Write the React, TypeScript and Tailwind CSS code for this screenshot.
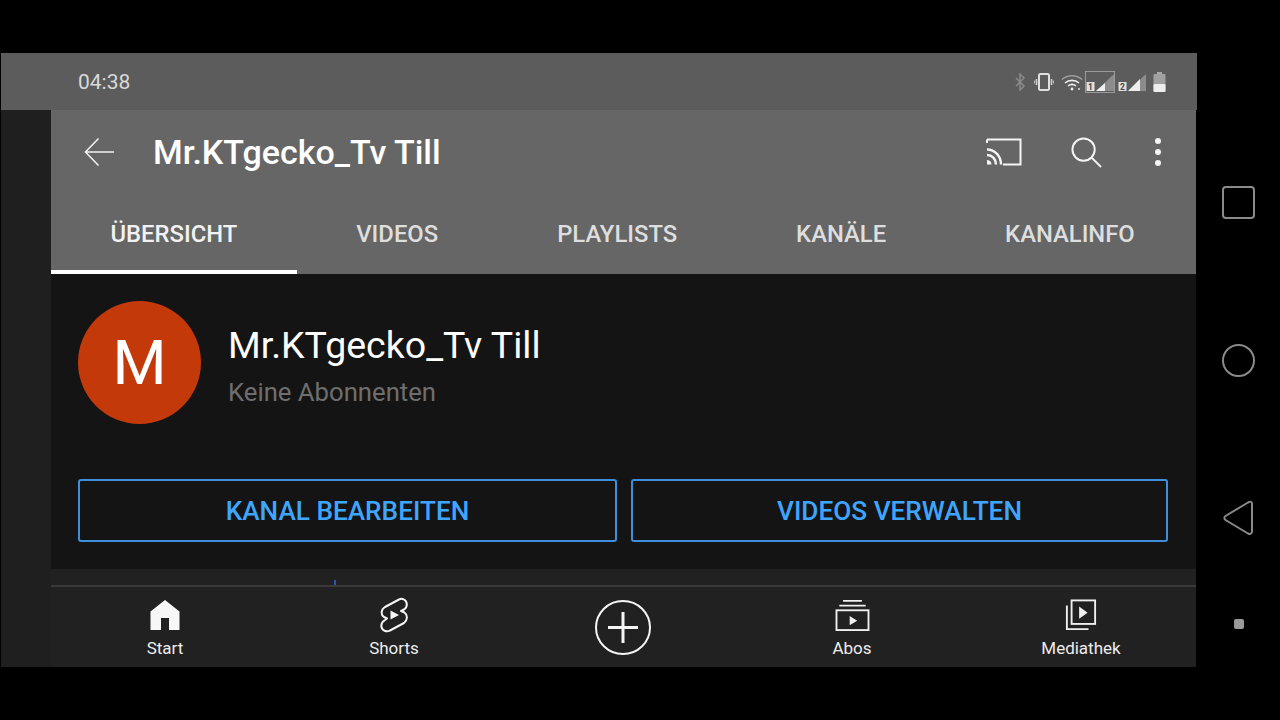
const font = { fontFamily: 'Roboto, sans-serif' }

const tabs = ['ÜBERSICHT', 'VIDEOS', 'PLAYLISTS', 'KANÄLE', 'KANALINFO']

function Sim({ n, boxed }: { n: string; boxed?: boolean }) {
  return (
    <svg width="30" height="22" viewBox="0 0 30 22" className="block">
      {boxed && <rect x="0.500" y="0.500" width="29" height="21" fill="none" stroke="#9a9a9a" />}
      <path d="M29 3V20H11Z" fill="#8c8c8c" />
      <path d={boxed ? 'M20 12V20H11Z' : 'M23 8V20H11Z'} fill="#eeeeee" />
      <rect x="1.500" y="11" width="8" height="9" fill="#e0e0e0" />
      <text x="5.500" y="19" fontSize="8.500" fontWeight="700" textAnchor="middle" fill="#444" fontFamily="Roboto">{n}</text>
    </svg>
  )
}

function StatusIcons() {
  return (
    <div className="flex items-center">
      <svg width="12" height="18" viewBox="0 0 12 18" fill="none" stroke="#8a8a8a" strokeWidth="1.500" className="mr-[8px]">
        <path d="M2 5l8 8-4 4V1l4 4-8 8" />
      </svg>
      <svg width="20" height="18" viewBox="0 0 20 18" fill="none" className="mr-[7px]">
        <rect x="5" y="1" width="10" height="16" rx="1.500" stroke="#e0e0e0" strokeWidth="2" />
        <path d="M2.500 6v6M17.500 6v6" stroke="#d0d0d0" strokeWidth="1.600" />
        <path d="M0.500 7.500v3M19.500 7.500v3" stroke="#bdbdbd" strokeWidth="1" />
      </svg>
      <svg width="22" height="18" viewBox="0 0 22 18" fill="none" strokeWidth="1.600" className="mr-[2px]">
        <path d="M1 6.500C6.500 1.500 15.500 1.500 21 6.500" stroke="#9c9c9c" />
        <path d="M4 10C8 6.500 14 6.500 18 10" stroke="#eeeeee" />
        <path d="M7 13C9.500 11 12.500 11 15 13" stroke="#eeeeee" />
        <circle cx="11" cy="16" r="1.400" fill="#eeeeee" stroke="none" />
        <circle cx="18" cy="16" r="1" fill="#dddddd" stroke="none" />
      </svg>
      <Sim n="1" boxed />
      <div className="ml-[2px]"><Sim n="2" /></div>
      <svg width="13" height="20" viewBox="0 0 13 20" className="ml-[6px]">
        <rect x="4" y="0" width="5" height="2" fill="#a8a8a8" />
        <rect x="0.500" y="2" width="12" height="18" rx="1" fill="#a0a0a0" />
        <rect x="0.500" y="12" width="12" height="8" rx="1" fill="#eeeeee" />
      </svg>
    </div>
  )
}

function NavItem({ label, children }: { label: string; children: React.ReactNode }) {
  return (
    <div className="w-[229px] h-full flex flex-col items-center pr-[1px]">
      <div className="h-[46px] mt-[5px] flex items-center justify-center">{children}</div>
      <span className="text-[17px] leading-[18px] text-[#ededed] mt-[1px]">{label}</span>
    </div>
  )
}

function Side() {
  return (
    <div className="flex-1 flex flex-col items-center pt-[133px]">
      <div className="w-[33px] h-[33px] rounded-[4px] border-[2px] border-[#8a8a8a]" />
      <div className="w-[33px] h-[33px] rounded-full border-[2px] border-[#8a8a8a] mt-[125px]" />
      <svg width="34" height="36" viewBox="0 0 34 36" fill="none" className="mt-[123px]">
        <path d="M30 3.500V31.500C30 33.500 28 34.500 26 33.500L3.500 20C2 19 2 17 3.500 16L26 2.500C28 1.500 30 1.500 30 3.500Z" stroke="#8a8a8a" strokeWidth="2" strokeLinejoin="round" />
      </svg>
      <div className="w-[10px] h-[10px] rounded-[2px] bg-[#9a9a9a] mt-[83px]" />
    </div>
  )
}

export default function App() {
  return (
    <div className="w-[1280px] h-[720px] bg-black flex pt-[53px] overflow-hidden" style={font}>
      <div className="w-[1196px] h-[614px] ml-px flex flex-col">
        <div className="h-[57px] bg-[#5c5c5c] flex items-center justify-between pl-[77px] pr-[31px]">
          <span className="text-[21px] text-[#d9d9d9] pt-[2px]">04:38</span>
          <StatusIcons />
        </div>
        <div className="flex-1 flex bg-[#1f1f1f] mr-px">
          <div className="w-[50px] shrink-0" />
          <div className="flex-1 min-w-0 flex flex-col">
            <div className="h-[164px] bg-[#666666] flex flex-col">
              <div className="h-[84px] flex items-center pl-[33px]">
                <svg width="31" height="30" viewBox="0 0 32 30" fill="none" stroke="#f2f2f2" strokeWidth="1.600">
                  <path d="M31 15H2M15 1L1.500 15L15 29" />
                </svg>
                <span className="text-[34px] font-medium text-white ml-[38px] whitespace-nowrap">Mr.KTgecko_Tv Till</span>
                <svg width="36" height="28" viewBox="0 0 36 28" fill="none" className="ml-auto">
                  <path d="M1 1.500H34.500V26.500H17" stroke="#f5f5f5" strokeWidth="2" />
                  <path d="M1 1.500V5" stroke="#f5f5f5" strokeWidth="2" />
                  <path d="M1 11.500C9 11.500 15 18 15 26.500M1 17C6 17 10 21 10 26.500" stroke="#f5f5f5" strokeWidth="2.400" />
                  <path d="M1 22a4.500 4.500 0 0 1 4.500 4.500H1Z" fill="#f5f5f5" />
                </svg>
                <svg width="31" height="31" viewBox="0 0 32 32" fill="none" stroke="#f5f5f5" strokeWidth="2" className="ml-[49px]">
                  <circle cx="13" cy="13" r="11.500" />
                  <path d="M21 21L31 31" />
                </svg>
                <div className="flex flex-col gap-[5px] ml-[53px] mr-[35px]">
                  <div className="w-[6px] h-[6px] rounded-full bg-[#f5f5f5]" />
                  <div className="w-[6px] h-[6px] rounded-full bg-[#f5f5f5]" />
                  <div className="w-[6px] h-[6px] rounded-full bg-[#f5f5f5]" />
                </div>
              </div>
              <div className="flex-1 flex">
                {tabs.map((t, i) => (
                  <div
                    key={t}
                    className={`px-[59.500px] flex items-center justify-center pt-[6px] whitespace-nowrap text-[23.800px] font-medium border-b-[4px] ${i === 0 ? 'border-white text-[#f2f2f2]' : 'border-transparent text-[#dedede]'}`}
                  >
                    {t}
                  </div>
                ))}
              </div>
            </div>
            <div className="h-[295px] bg-[#141414] pl-[27px] pr-[28px] pt-[27px]">
              <div className="flex items-center">
                <div className="w-[123px] h-[123px] rounded-full bg-[#c4390a] flex items-center justify-center text-white text-[62px]">M</div>
                <div className="ml-[27px] flex flex-col pt-[3px]">
                  <span className="text-[37.500px] leading-[44px] text-white whitespace-nowrap">Mr.KTgecko_Tv Till</span>
                  <span className="text-[25.700px] leading-[28px] text-[#6e6e6e] mt-[11px]">Keine Abonnenten</span>
                </div>
              </div>
              <div className="flex gap-[14px] mt-[55px]">
                <div className="w-[539px] h-[63px] rounded-[3px] border-[2px] border-[#3d8fdc] flex items-center justify-center pt-[2px] text-[26.200px] font-medium text-[#3ea6ff]">KANAL BEARBEITEN</div>
                <div className="flex-1 h-[63px] rounded-[3px] border-[2px] border-[#3d8fdc] flex items-center justify-center pt-[2px] text-[26.200px] font-medium text-[#3ea6ff]">VIDEOS VERWALTEN</div>
              </div>
            </div>
            <div className="h-[16px] bg-[#212121] relative">
              <div className="absolute left-[283px] bottom-0 w-[2px] h-[5px] bg-[#2f55b5]" />
            </div>
            <div className="flex-1 bg-[#212121] border-t-[2px] border-[#3a3a3a] flex">
              <NavItem label="Start">
                <svg width="30" height="32" viewBox="0 0 30 32" fill="#f7f7f7">
                  <path d="M15 1L29.500 12.500V31H19V19H11V31H.5V12.500Z" />
                </svg>
              </NavItem>
              <NavItem label="Shorts">
                <svg width="30" height="36" viewBox="0 0 30 36" fill="none">
                  <path d="M20 2.500L6 10C2 12.500 1.500 17.500 5 20L8 21.500L6 23C1 26 1.500 31.500 5 33.500C7 34.500 9.500 34.500 11 33.500L25 26C28.500 23.500 29 18 25.500 15.500L22 14L25 12.500C29 10 28.500 4.500 25 2.500C23.500 1.500 21.500 1.500 20 2.500Z" stroke="#f5f5f5" strokeWidth="2" strokeLinejoin="round" />
                  <path d="M11.500 13.500L20 18L11.500 22.500Z" fill="#f5f5f5" />
                </svg>
              </NavItem>
              <div className="w-[229px] h-full flex items-center justify-center pr-[1px]">
                <svg width="56" height="55" viewBox="0 0 56 55" fill="none" stroke="#f5f5f5">
                  <ellipse cx="28" cy="27.500" rx="27" ry="26.500" strokeWidth="2" />
                  <path d="M28 12V43M13 27.500H43" strokeWidth="3" />
                </svg>
              </div>
              <NavItem label="Abos">
                <svg width="35" height="32" viewBox="0 0 36 34" fill="none" stroke="#f0f0f0" strokeWidth="2">
                  <path d="M8 2H28M4 7H32" />
                  <rect x="1" y="12" width="34" height="21" />
                  <path d="M15 18V28L23 23Z" fill="#f0f0f0" stroke="none" />
                </svg>
              </NavItem>
              <NavItem label="Mediathek">
                <svg width="32" height="32" viewBox="0 0 34 34" fill="none" stroke="#f0f0f0" strokeWidth="2">
                  <rect x="7" y="1.500" width="25" height="25" />
                  <path d="M2 7V32H25" />
                  <path d="M15 8V21L24 14.500Z" fill="#f0f0f0" stroke="none" />
                </svg>
              </NavItem>
            </div>
          </div>
        </div>
      </div>
      <Side />
    </div>
  )
}
